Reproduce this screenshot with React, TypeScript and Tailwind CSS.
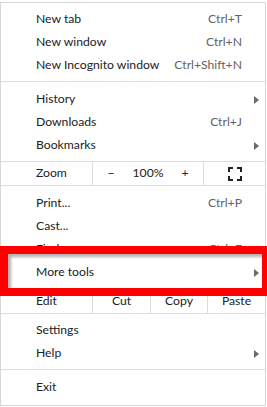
import React from "react";

type Item = { label: string; shortcut?: string; sub?: boolean };

const group1: Item[] = [
  { label: "New tab", shortcut: "Ctrl+T" },
  { label: "New window", shortcut: "Ctrl+N" },
  { label: "New Incognito window", shortcut: "Ctrl+Shift+N" },
];

const group2: Item[] = [
  { label: "History", sub: true },
  { label: "Downloads", shortcut: "Ctrl+J" },
  { label: "Bookmarks", sub: true },
];

const group3: Item[] = [
  { label: "Print...", shortcut: "Ctrl+P" },
  { label: "Cast..." },
  { label: "Find...", shortcut: "Ctrl+F" },
  { label: "More tools", sub: true },
];

const group4: Item[] = [
  { label: "Settings" },
  { label: "Help", sub: true },
];

function Arrow() {
  return (
    <svg width="5" height="8" viewBox="0 0 5 8" className="ml-[12px]">
      <path d="M0 0 L5 4 L0 8 Z" fill="#6b6b6b" />
    </svg>
  );
}

function Row({ item }: { item: Item }) {
  return (
    <div className="flex h-[23px] items-center whitespace-nowrap pl-[35px]">
      <span className="flex-1 text-[#202124]">{item.label}</span>
      {item.shortcut && <span className="text-[#5f6368]">{item.shortcut}</span>}
      <span className="flex w-[23px] items-center">{item.sub && <Arrow />}</span>
    </div>
  );
}

function Separator() {
  return <div className="mb-[6px] mt-[4px] h-px bg-[#dadce0]" />;
}

function FullscreenIcon() {
  return (
    <svg width="14" height="14" viewBox="0 0 14 14" fill="none" stroke="#202124" strokeWidth="2">
      <path d="M1 5 V1 H5" />
      <path d="M9 1 H13 V5" />
      <path d="M13 9 V13 H9" />
      <path d="M5 13 H1 V9" />
    </svg>
  );
}

export default function App() {
  return (
    <div className="relative h-[407px] w-[267px] overflow-hidden bg-white pt-[2px]">
      <div
        className="h-[404px] w-[266px] border border-[#d6d6d6] bg-white pt-[5px] text-[12.2px]"
        style={{ fontFamily: 'Lato, "Open Sans", sans-serif' }}
      >
        {group1.map((i) => (
          <Row key={i.label} item={i} />
        ))}
        <Separator />
        {group2.map((i) => (
          <Row key={i.label} item={i} />
        ))}

        {/* Zoom row */}
        <div className="mt-[4px] flex h-[25px] border-y border-[#dadce0]">
          <div className="flex w-[92px] items-center border-r border-[#dadce0] pl-[35px] text-[#202124]">
            Zoom
          </div>
          <div className="flex w-[111px] items-center border-r border-[#dadce0] text-[#202124]">
            <span className="w-[36px] text-center">−</span>
            <span className="flex-1 text-center">100%</span>
            <span className="w-[36px] text-center">+</span>
          </div>
          <div className="flex flex-1 items-center justify-center">
            <FullscreenIcon />
          </div>
        </div>

        <div className="mt-[6px]">
          {group3.map((i) => (
            <Row key={i.label} item={i} />
          ))}
        </div>

        {/* Edit row */}
        <div className="mt-[5px] flex h-[25px] border-y border-[#dadce0] text-[#202124]">
          <div className="flex w-[92px] items-center border-r border-[#dadce0] pl-[35px]">Edit</div>
          <div className="flex w-[58px] items-center justify-center border-r border-[#dadce0]">Cut</div>
          <div className="flex w-[57px] items-center justify-center border-r border-[#dadce0]">Copy</div>
          <div className="flex flex-1 items-center justify-center">Paste</div>
        </div>

        <div className="mt-[5px]">
          {group4.map((i) => (
            <Row key={i.label} item={i} />
          ))}
        </div>
        <Separator />
        <Row item={{ label: "Exit" }} />
      </div>

      {/* Highlight box drawn over the menu */}
      <div className="absolute left-0 top-[246px] h-[50px] w-[270px] border-[8px] border-[#ff0000] shadow-[inset_3px_3px_3px_rgba(0,0,0,0.3)]" />
    </div>
  );
}
